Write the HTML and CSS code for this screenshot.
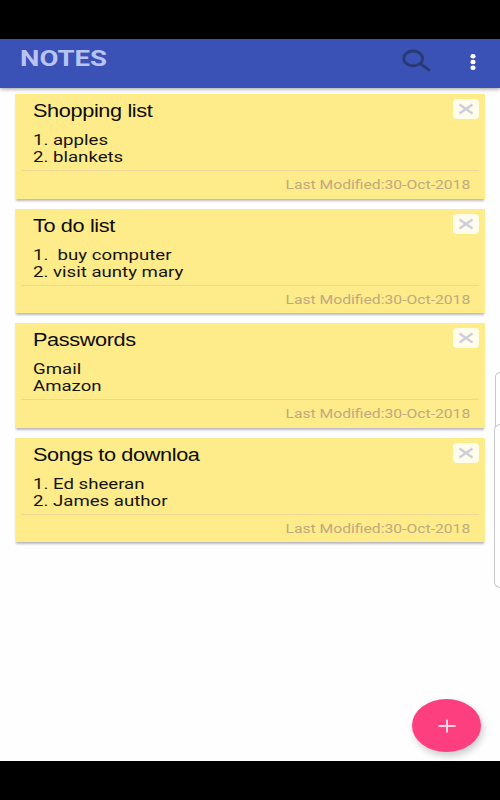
FILE: index.html
```
<!DOCTYPE html>
<html lang="en">
<head>
    <meta charset="UTF-8">
    <meta name="viewport" content="width=device-width, initial-scale=1.0">
    <title>Notes</title>
    <link rel="stylesheet" href="styles.css">
</head>
<body>

    <header class="toolbar">
        <h1 class="app-title">NOTES</h1>
        <svg class="search-icon" viewBox="0 0 30 24" width="30" height="24">
            <ellipse cx="11.2" cy="9.4" rx="9.4" ry="7.4"/>
            <path d="M17.6 14.2L27.8 21.6"/>
        </svg>
        <svg class="menu-icon" viewBox="0 0 6 18" width="6" height="18">
            <ellipse cx="3" cy="3.3" rx="2.6" ry="2.2"/>
            <ellipse cx="3" cy="9" rx="2.6" ry="2.2"/>
            <ellipse cx="3" cy="14.7" rx="2.6" ry="2.2"/>
        </svg>
    </header>

    <main class="notes">
        <article class="note">
            <button class="delete"><svg viewBox="0 0 16 12" width="16" height="12"><path d="M1.5 1.5L14.5 10.5M14.5 1.5L1.5 10.5"/></svg></button>
            <h2 class="note-title">Shopping list</h2>
            <p class="note-text">1. apples
2. blankets</p>
            <footer class="note-footer"><span class="modified">Last Modified:30-Oct-2018</span></footer>
        </article>
        <article class="note">
            <button class="delete"><svg viewBox="0 0 16 12" width="16" height="12"><path d="M1.5 1.5L14.5 10.5M14.5 1.5L1.5 10.5"/></svg></button>
            <h2 class="note-title">To do list</h2>
            <p class="note-text">1.  buy computer
2. visit aunty mary</p>
            <footer class="note-footer"><span class="modified">Last Modified:30-Oct-2018</span></footer>
        </article>
        <article class="note">
            <button class="delete"><svg viewBox="0 0 16 12" width="16" height="12"><path d="M1.5 1.5L14.5 10.5M14.5 1.5L1.5 10.5"/></svg></button>
            <h2 class="note-title">Passwords</h2>
            <p class="note-text">Gmail
Amazon</p>
            <footer class="note-footer"><span class="modified">Last Modified:30-Oct-2018</span></footer>
        </article>
        <article class="note">
            <button class="delete"><svg viewBox="0 0 16 12" width="16" height="12"><path d="M1.5 1.5L14.5 10.5M14.5 1.5L1.5 10.5"/></svg></button>
            <h2 class="note-title">Songs to downloa</h2>
            <p class="note-text">1. Ed sheeran
2. James author</p>
            <footer class="note-footer"><span class="modified">Last Modified:30-Oct-2018</span></footer>
        </article>

        <!-- edge panel handles -->
        <div class="handles">
            <div class="handle handle-back"></div>
            <div class="handle handle-front"></div>
        </div>

        <button class="add">
            <svg viewBox="0 0 18 14" width="18" height="14"><path d="M0.5 7H17.5M9 0.5V13.5"/></svg>
        </button>
    </main>

</body>
</html>
```

FILE: styles.css
```
* {
    box-sizing: border-box;
}
body {
    margin: 0;
    height: 800px;
    padding: 39px 0;
    background-color: #000;
    font-family: Roboto, sans-serif;
    display: flex;
    flex-direction: column;
    overflow: hidden;
}
h1, h2, p {
    margin: 0;
    width: fit-content;
    font-weight: normal;
    white-space: pre;
    transform-origin: left center;
}
button {
    border: none;
    padding: 0;
    display: flex;
    align-items: center;
    justify-content: center;
    cursor: pointer;
}
.toolbar {
    height: 49px;
    flex: none;
    display: flex;
    align-items: flex-start;
    padding: 0 24px 0 20px;
    background-color: #3a51b5;
    box-shadow: 0 1px 4px rgba(0,0,0,0.4);
    z-index: 1;
}
.app-title {
    font-size: 22px;
    line-height: 40px;
    font-weight: bold;
    color: #b9c4f3;
    transform: scaleX(1.25);
    margin-right: auto;
}
.search-icon {
    margin: 10px 38px 0 0;
    fill: none;
    stroke: #2b3973;
    stroke-width: 2.8;
}
.menu-icon {
    margin-top: 14px;
    fill: #fff;
}
.notes {
    position: relative;
    height: 673px;
    flex: none;
    padding: 6px 15px;
    background-color: #fefefe;
    display: flex;
    flex-direction: column;
    gap: 10px;
}
.note {
    position: relative;
    height: 104.5px;
    flex: none;
    padding: 6px 6px 0 18px;
    background-color: #fdec89;
    box-shadow: 0 3px 2px -1px rgba(60,60,90,0.35);
}
.note-title {
    font-family: "Liberation Sans", sans-serif;
    font-size: 17.5px;
    letter-spacing: -0.3px;
    line-height: 22px;
    color: #0c0b06;
    transform: scaleX(1.24);
}
.note-text {
    margin-top: 10px;
    font-size: 14px;
    line-height: 17px;
    color: #15130b;
    transform: scaleX(1.33);
}
.note-footer {
    margin: 4px 0 0 -12px;
    padding-right: 9px;
    border-top: 1px solid #ecd896;
    text-align: right;
}
.modified {
    display: inline-block;
    font-size: 12.5px;
    line-height: 28px;
    color: #beaa80;
    transform: scaleX(1.255);
    transform-origin: right center;
}
.delete {
    position: absolute;
    top: 5px;
    right: 6px;
    width: 26px;
    height: 20px;
    border-radius: 4px;
    background-color: #fefcea;
}
.delete path {
    stroke: #d0cddb;
    stroke-width: 2.4;
}
.handles {
    position: absolute;
    top: 284px;
    right: 0;
    width: 6px;
    height: 216px;
}
.handle {
    position: absolute;
    right: 0;
    border: 1px solid #c8c8cc;
    border-right: none;
    border-radius: 6px 0 0 6px;
    background-color: #fefefe;
}
.handle-back {
    top: 0;
    width: 5px;
    height: 164px;
}
.handle-front {
    top: 52px;
    width: 6px;
    height: 164px;
}
.add {
    position: absolute;
    top: 611px;
    right: 19px;
    width: 69px;
    height: 53px;
    border-radius: 50%;
    background-color: #fd3f80;
    box-shadow: 2px 4px 7px rgba(0,0,0,0.2);
}
.add path {
    stroke: #ffd5e4;
    stroke-width: 2;
}
```
